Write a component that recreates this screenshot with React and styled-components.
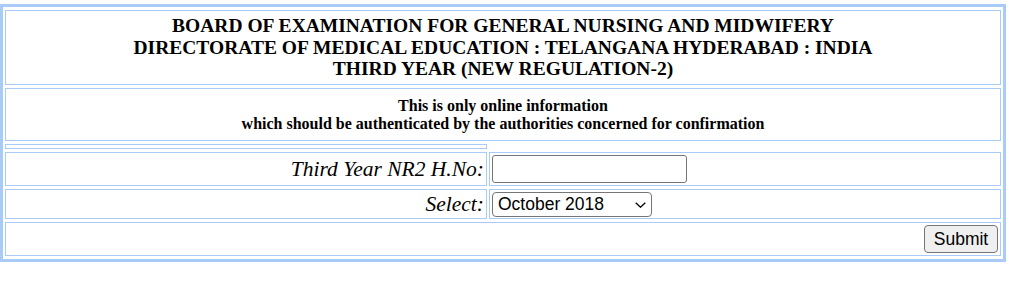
import React from "react";
import styled, { createGlobalStyle } from "styled-components";

const Global = createGlobalStyle`
  html, body { margin: 0; padding: 0; background: #fff; }
  body { font-family: "Liberation Serif", "Times New Roman", serif; color: #000; }
`;

const Page = styled.div`
  padding-top: 4px;
`;

const Table = styled.table`
  width: 1006px;
  border: 3px solid #a9cbf7;
  border-collapse: separate;
  border-spacing: 2px 3px;
  table-layout: fixed;
`;

const Cell = styled.td`
  border: 1px solid #a9cbf7;
  padding: ${(p) => p.$pad || "0 2px"};
  height: ${(p) => p.$h}px;
  box-sizing: border-box;
  text-align: ${(p) => p.$align || "left"};
  vertical-align: middle;
`;

const Title = styled.div`
  font-weight: bold;
  font-size: 19.5px;
  line-height: 21.5px;
`;

const Notice = styled.div`
  font-weight: bold;
  font-size: 16px;
  line-height: 18px;
`;

const Label = styled.span`
  font-style: italic;
  font-size: 21.5px;
`;

const TextInput = styled.input`
  box-sizing: border-box;
  width: 195px;
  height: 28px;
  margin: 0;
  border: 1px solid #767676;
  border-radius: 3px;
  font-size: 16px;
  display: block;
`;

const SelectWrap = styled.div`
  position: relative;
  width: 160px;
  height: 25px;
`;

const Select = styled.select`
  appearance: none;
  box-sizing: border-box;
  width: 160px;
  height: 25px;
  margin: 0;
  padding: 0 24px 0 5px;
  border: 1px solid #767676;
  border-radius: 4px;
  background: #fff;
  font-family: "Liberation Sans", Arial, sans-serif;
  font-size: 17.5px;
  color: #000;
`;

const Chevron = styled.svg`
  position: absolute;
  right: 6px;
  top: 10px;
  pointer-events: none;
`;

const Button = styled.button`
  box-sizing: border-box;
  width: 74px;
  height: 28px;
  margin: 0;
  padding: 0;
  border: 1px solid #767676;
  border-radius: 4px;
  background: #efefef;
  font-family: "Liberation Sans", Arial, sans-serif;
  font-size: 17.5px;
  color: #000;
`;

export default function App() {
  return (
    <>
      <Global />
      <Page>
        <Table>
          <colgroup>
            <col style={{ width: 482 }} />
            <col />
          </colgroup>
          <tbody>
            <tr>
              <Cell colSpan={2} $h={75} $align="center">
                <Title>
                  BOARD OF EXAMINATION FOR GENERAL NURSING AND MIDWIFERY
                  <br />
                  DIRECTORATE OF MEDICAL EDUCATION : TELANGANA HYDERABAD : INDIA
                  <br />
                  THIRD YEAR (NEW REGULATION-2)
                </Title>
              </Cell>
            </tr>
            <tr>
              <Cell colSpan={2} $h={53} $align="center">
                <Notice>
                  This is only online information
                  <br />
                  which should be authenticated by the authorities concerned for confirmation
                </Notice>
              </Cell>
            </tr>
            <tr>
              <Cell $h={5} $pad="0" />
            </tr>
            <tr>
              <Cell $h={34} $align="right">
                <Label>Third Year NR2 H.No:</Label>
              </Cell>
              <Cell $h={34}>
                <TextInput type="text" />
              </Cell>
            </tr>
            <tr>
              <Cell $h={30} $align="right">
                <Label>Select:</Label>
              </Cell>
              <Cell $h={30}>
                <SelectWrap>
                  <Select defaultValue="oct2018">
                    <option value="oct2018">October 2018</option>
                  </Select>
                  <Chevron width="11" height="6" viewBox="0 0 11 6">
                    <path d="M0.7 0.7 L5.5 5.2 L10.3 0.7" fill="none" stroke="#000" strokeWidth="1.3" />
                  </Chevron>
                </SelectWrap>
              </Cell>
            </tr>
            <tr>
              <Cell colSpan={2} $h={34} $align="right">
                <Button type="submit">Submit</Button>
              </Cell>
            </tr>
          </tbody>
        </Table>
      </Page>
    </>
  );
}
